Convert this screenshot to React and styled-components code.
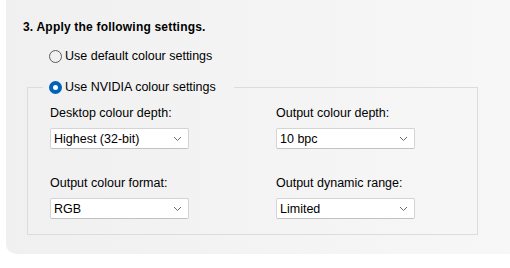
import React, { useState } from "react";
import styled, { createGlobalStyle } from "styled-components";

const GlobalStyle = createGlobalStyle`
  html, body {
    margin: 0;
    background: #ffffff;
  }
  body {
    font-family: "Liberation Sans", Arial, sans-serif;
    color: #000;
  }
`;

const Panel = styled.div`
  box-sizing: border-box;
  margin-left: 6px;
  height: 254px;
  padding: 18px 0 0 17px;
  border-bottom-left-radius: 10px;
  background: linear-gradient(to right, #f0f0f0, #f7f7f7);
`;

const Title = styled.h3`
  margin: 0;
  font-size: 12px;
  line-height: 18px;
  font-weight: 700;
  letter-spacing: 0.2px;
`;

const RadioRow = styled.label`
  display: flex;
  align-items: center;
  gap: 3px;
  height: 18px;
  font-size: 12.5px;
  cursor: default;
  margin: ${(p) => p.$margin || "0"};
`;

const Dot = styled.span`
  box-sizing: border-box;
  width: 13px;
  height: 13px;
  border-radius: 50%;
  border: ${(p) => (p.$on ? "4px solid #0062b8" : "1px solid #5c5c5c")};
  background: ${(p) => (p.$on ? "#ffffff" : "transparent")};
`;

const Group = styled.fieldset`
  box-sizing: border-box;
  width: 451px;
  margin: 13px 0 0 4px;
  padding: 0;
  border: 1px solid #dcdcdc;
`;

const Legend = styled.legend`
  margin-left: 15px;
  padding: 0 18px 0 6px;
`;

const Grid = styled.div`
  display: grid;
  grid-template-columns: 226px 139px;
  row-gap: 26px;
  padding: 9px 0 15px 22px;
`;

const Field = styled.div`
  display: flex;
  flex-direction: column;
  gap: 7px;
`;

const Label = styled.div`
  font-size: 12.5px;
  line-height: 16px;
`;

const Select = styled.div`
  box-sizing: border-box;
  width: 139px;
  height: 21px;
  display: flex;
  align-items: center;
  justify-content: space-between;
  padding: 0 6px 0 3px;
  background: #ffffff;
  border: 1px solid #d4d4d4;
  border-bottom-color: #c2c2c2;
  border-radius: 2px;
  font-size: 12.5px;
`;

const Chevron = () => (
  <svg width="9" height="6" viewBox="0 0 9 6">
    <path d="M1 1 L4.5 4.5 L8 1" fill="none" stroke="#6a6a6a" strokeWidth="1" />
  </svg>
);

const fields = [
  { label: "Desktop colour depth:", value: "Highest (32-bit)" },
  { label: "Output colour depth:", value: "10 bpc" },
  { label: "Output colour format:", value: "RGB" },
  { label: "Output dynamic range:", value: "Limited" },
];

export default function App() {
  const [mode, setMode] = useState("nvidia");
  return (
    <>
      <GlobalStyle />
      <Panel>
        <Title>3. Apply the following settings.</Title>
        <RadioRow $margin="11px 0 0 26px" onClick={() => setMode("default")}>
          <Dot $on={mode === "default"} />
          Use default colour settings
        </RadioRow>
        <Group>
          <Legend>
            <RadioRow onClick={() => setMode("nvidia")}>
              <Dot $on={mode === "nvidia"} />
              Use NVIDIA colour settings
            </RadioRow>
          </Legend>
          <Grid>
            {fields.map((f) => (
              <Field key={f.label}>
                <Label>{f.label}</Label>
                <Select>
                  {f.value}
                  <Chevron />
                </Select>
              </Field>
            ))}
          </Grid>
        </Group>
      </Panel>
    </>
  );
}
